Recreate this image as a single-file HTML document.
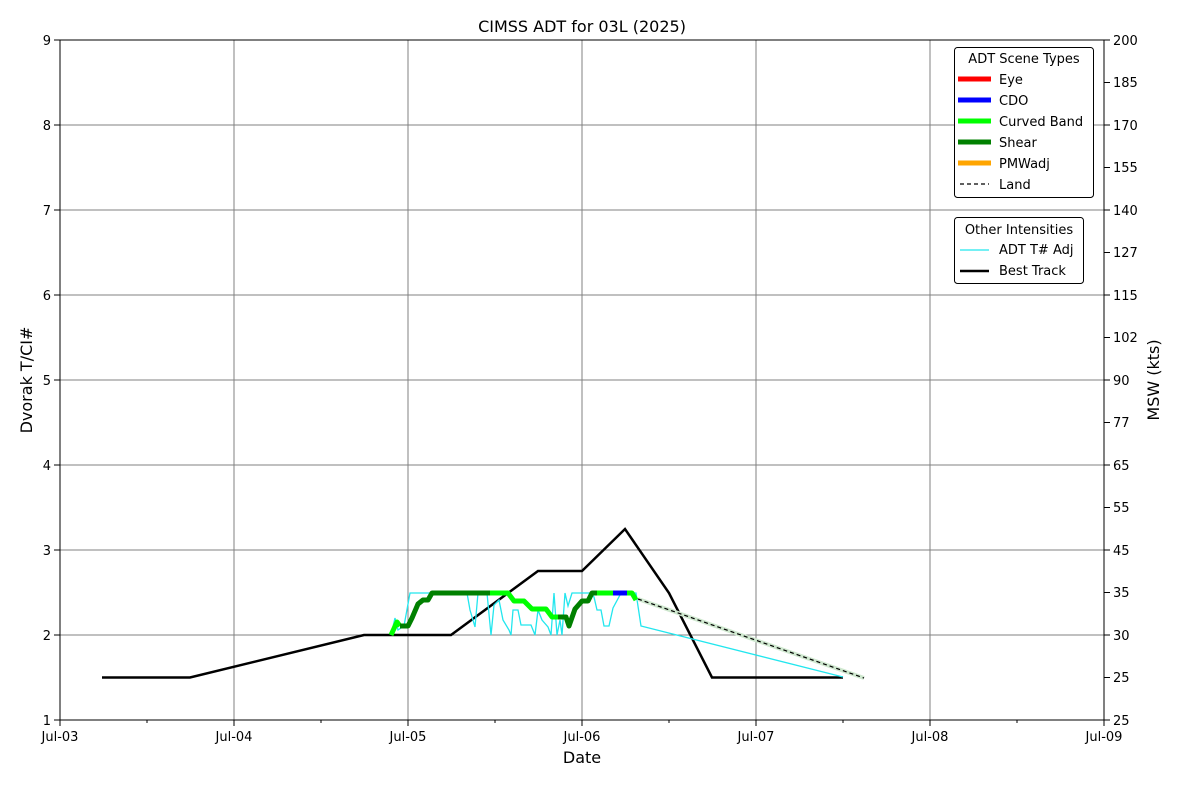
<!DOCTYPE html>
<html><head><meta charset="utf-8"><style>
html,body{margin:0;padding:0;background:#fff;}
svg{display:block;font-family:"DejaVu Sans","Liberation Sans",sans-serif;}
</style></head><body>
<svg width="1200" height="800" viewBox="0 0 1200 800" xmlns="http://www.w3.org/2000/svg">
<rect width="1200" height="800" fill="#fff"/>
<g stroke="#808080" stroke-width="1">
<line x1="234" y1="40" x2="234" y2="720"/><line x1="408" y1="40" x2="408" y2="720"/><line x1="582" y1="40" x2="582" y2="720"/><line x1="756" y1="40" x2="756" y2="720"/><line x1="930" y1="40" x2="930" y2="720"/>
<line x1="60" y1="125" x2="1104" y2="125"/><line x1="60" y1="210" x2="1104" y2="210"/><line x1="60" y1="295" x2="1104" y2="295"/><line x1="60" y1="380" x2="1104" y2="380"/><line x1="60" y1="465" x2="1104" y2="465"/><line x1="60" y1="550" x2="1104" y2="550"/><line x1="60" y1="635" x2="1104" y2="635"/>
</g>
<!-- best track -->
<polyline fill="none" stroke="#000" stroke-width="2.5" points="102,677.5 190,677.5 364,635 451,635 538,571 582,571 625,529 669,593 712,677.5 843,677.5"/>
<!-- cyan -->
<polyline fill="none" stroke="#22e6ee" stroke-width="1.3" points="391,635 395,618 398,630 404,626 410,593 467,593 470,610 475,627 478,593 487,593 491,635 494,605 499,600 503,620 509,630 511,635 513,610 518,610 521,625 531,625 535,635 538,610 542,620 548,627 551,635 554,593 557,635 560,620 562,635 565,593 568,606 572,593 590,593 594,597 597,610 601,610 604,626 609,626 613,608 620,595 632,593 636,593 641,626 843,677"/>
<!-- land -->
<line x1="638" y1="599" x2="864" y2="678" stroke="#cfe8cf" stroke-width="4"/>
<line x1="638" y1="599" x2="864" y2="678" stroke="#000" stroke-width="1.2" stroke-dasharray="4,3"/>
<!-- scene types -->
<g fill="none" stroke-width="5" stroke-linejoin="round">
<polyline stroke="#00ff00" points="391,635 397,622 400,626"/>
<polyline stroke="#008000" points="400,626 408,626 412,618 418,604 423,600 428,600 432,593 490,593"/>
<polyline stroke="#00ff00" points="490,593 508,593 514,601 524,601 532,609 546,609 552,617 560,617"/>
<polyline stroke="#008000" points="558,617 566,617 569,626 575,609 582,601 588,601 592,593 597,593"/>
<polyline stroke="#00ff00" points="597,593 613,593"/>
<polyline stroke="#0000ff" points="613,593 627,593"/>
<polyline stroke="#00ff00" points="627,593 632,593 636,600"/>
</g>
<rect x="60" y="40" width="1044" height="680" fill="none" stroke="#000" stroke-width="1"/>
<!-- ticks -->
<g stroke="#000" stroke-width="1">
<line x1="60" y1="720" x2="60" y2="726"/><line x1="234" y1="720" x2="234" y2="726"/><line x1="408" y1="720" x2="408" y2="726"/><line x1="582" y1="720" x2="582" y2="726"/><line x1="756" y1="720" x2="756" y2="726"/><line x1="930" y1="720" x2="930" y2="726"/><line x1="1104" y1="720" x2="1104" y2="726"/>
<line x1="147" y1="720" x2="147" y2="723"/><line x1="321" y1="720" x2="321" y2="723"/><line x1="495" y1="720" x2="495" y2="723"/><line x1="669" y1="720" x2="669" y2="723"/><line x1="843" y1="720" x2="843" y2="723"/><line x1="1017" y1="720" x2="1017" y2="723"/>
<line x1="54" y1="40" x2="60" y2="40"/><line x1="54" y1="125" x2="60" y2="125"/><line x1="54" y1="210" x2="60" y2="210"/><line x1="54" y1="295" x2="60" y2="295"/><line x1="54" y1="380" x2="60" y2="380"/><line x1="54" y1="465" x2="60" y2="465"/><line x1="54" y1="550" x2="60" y2="550"/><line x1="54" y1="635" x2="60" y2="635"/><line x1="54" y1="720" x2="60" y2="720"/>
</g>
<g stroke="#000" stroke-width="1">
<line x1="1104" y1="40" x2="1110" y2="40"/><line x1="1104" y1="82.5" x2="1110" y2="82.5"/><line x1="1104" y1="125" x2="1110" y2="125"/><line x1="1104" y1="167.5" x2="1110" y2="167.5"/><line x1="1104" y1="210" x2="1110" y2="210"/><line x1="1104" y1="252.5" x2="1110" y2="252.5"/><line x1="1104" y1="295" x2="1110" y2="295"/><line x1="1104" y1="337.5" x2="1110" y2="337.5"/><line x1="1104" y1="380" x2="1110" y2="380"/><line x1="1104" y1="422.5" x2="1110" y2="422.5"/><line x1="1104" y1="465" x2="1110" y2="465"/><line x1="1104" y1="507.5" x2="1110" y2="507.5"/><line x1="1104" y1="550" x2="1110" y2="550"/><line x1="1104" y1="592.5" x2="1110" y2="592.5"/><line x1="1104" y1="635" x2="1110" y2="635"/><line x1="1104" y1="677.5" x2="1110" y2="677.5"/><line x1="1104" y1="720" x2="1110" y2="720"/>
</g>
<g font-size="13" fill="#000" text-anchor="end">
<text x="51" y="45">9</text><text x="51" y="130">8</text><text x="51" y="215">7</text><text x="51" y="300">6</text><text x="51" y="385">5</text><text x="51" y="470">4</text><text x="51" y="555">3</text><text x="51" y="640">2</text><text x="51" y="725">1</text>
</g>
<g font-size="13" fill="#000" text-anchor="start">
<text x="1113" y="45">200</text><text x="1113" y="87">185</text><text x="1113" y="130">170</text><text x="1113" y="172">155</text><text x="1113" y="215">140</text><text x="1113" y="257">127</text><text x="1113" y="300">115</text><text x="1113" y="342">102</text><text x="1113" y="385">90</text><text x="1113" y="427">77</text><text x="1113" y="470">65</text><text x="1113" y="512">55</text><text x="1113" y="555">45</text><text x="1113" y="597">35</text><text x="1113" y="640">30</text><text x="1113" y="682">25</text><text x="1113" y="725">25</text>
</g>
<g font-size="13" fill="#000" text-anchor="middle">
<text x="60" y="741">Jul-03</text><text x="234" y="741">Jul-04</text><text x="408" y="741">Jul-05</text><text x="582" y="741">Jul-06</text><text x="756" y="741">Jul-07</text><text x="930" y="741">Jul-08</text><text x="1104" y="741">Jul-09</text>
</g>
<text x="582" y="32" font-size="16" text-anchor="middle">CIMSS ADT for 03L (2025)</text>
<text x="582" y="763" font-size="16" text-anchor="middle">Date</text>
<text transform="translate(32,380) rotate(-90)" font-size="16" text-anchor="middle">Dvorak T/CI#</text>
<text transform="translate(1159,380) rotate(-90)" font-size="16" text-anchor="middle">MSW (kts)</text>
<!-- legend 1 -->
<rect x="954.5" y="47.5" width="139" height="150" rx="3" fill="#fff" stroke="#000" stroke-width="1"/>
<text x="1024" y="63" font-size="13" text-anchor="middle">ADT Scene Types</text>
<g stroke-width="5">
<line x1="958" y1="79" x2="991" y2="79" stroke="#ff0000"/>
<line x1="958" y1="100" x2="991" y2="100" stroke="#0000ff"/>
<line x1="958" y1="121" x2="991" y2="121" stroke="#00ff00"/>
<line x1="958" y1="142" x2="991" y2="142" stroke="#008000"/>
<line x1="958" y1="163" x2="991" y2="163" stroke="#ffa500"/>
</g>
<line x1="960" y1="184" x2="989" y2="184" stroke="#000" stroke-width="1.2" stroke-dasharray="4,3"/>
<g font-size="13">
<text x="999" y="84">Eye</text><text x="999" y="105">CDO</text><text x="999" y="126">Curved Band</text><text x="999" y="147">Shear</text><text x="999" y="168">PMWadj</text><text x="999" y="189">Land</text>
</g>
<!-- legend 2 -->
<rect x="954.5" y="217.5" width="129" height="66" rx="3" fill="#fff" stroke="#000" stroke-width="1"/>
<text x="1019" y="234" font-size="13" text-anchor="middle">Other Intensities</text>
<line x1="960" y1="250" x2="989" y2="250" stroke="#22e6ee" stroke-width="1.3"/>
<line x1="960" y1="271" x2="989" y2="271" stroke="#000" stroke-width="2.5"/>
<text x="999" y="254" font-size="13">ADT T# Adj</text>
<text x="999" y="275" font-size="13">Best Track</text>
</svg>
</body></html>
